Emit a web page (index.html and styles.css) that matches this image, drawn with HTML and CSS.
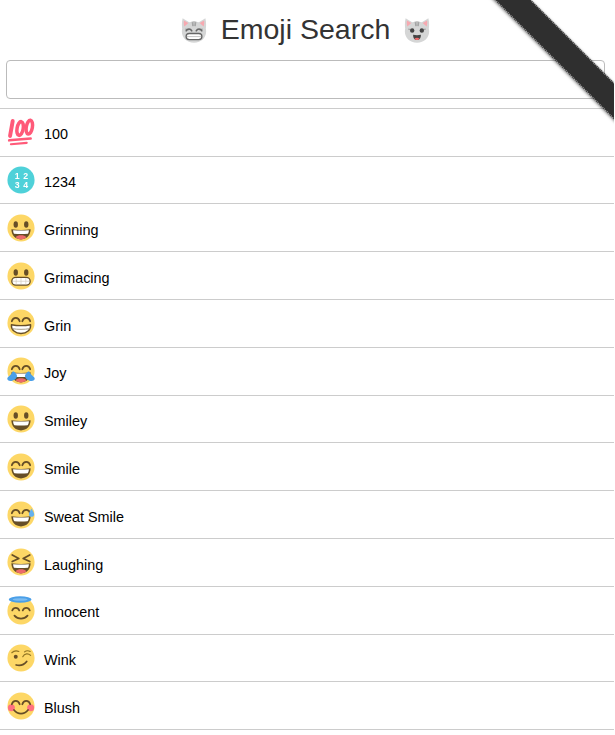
FILE: index.html
```html
<!DOCTYPE html>
<html lang="en">
<head>
  <meta charset="UTF-8" />
  <meta name="viewport" content="width=device-width, initial-scale=1.0" />
  <title>Emoji Search</title>
  <link rel="stylesheet" href="styles.css">
</head>
<body>

  <!-- shared emoji parts -->
  <svg class="defs" aria-hidden="true">
    <symbol id="eyes-round" viewBox="0 0 64 64">
      <ellipse cx="20" cy="24" rx="5" ry="7.500" fill="#664e27"/>
      <ellipse cx="44" cy="24" rx="5" ry="7.500" fill="#664e27"/>
    </symbol>
    <symbol id="eyes-arch" viewBox="0 0 64 64">
      <path d="M11 28c3-10 15-10 18 0M35 28c3-10 15-10 18 0" fill="none" stroke="#664e27" stroke-width="4" stroke-linecap="round"/>
    </symbol>
    <symbol id="mouth-open" viewBox="0 0 64 64">
      <path d="M10 35c14 2 30 2 44 0 0 13-9 23-22 23S10 48 10 35z" fill="#664e27"/>
      <path d="M14 37c12 1 24 1 36 0 0 4-1 7-3 9-10 1-20 1-30 0-2-2-3-5-3-9z" fill="#fff"/>
    </symbol>
    <symbol id="mouth-tongue" viewBox="0 0 64 64">
      <path d="M10 35c14 2 30 2 44 0 0 13-9 23-22 23S10 48 10 35z" fill="#664e27"/>
      <path d="M14 37c12 1 24 1 36 0 0 3-1 6-2 8-10 1-22 1-32 0-1-2-2-5-2-8z" fill="#fff"/>
      <path d="M20 53c4-6 20-6 24 0-3 3-7 5-12 5s-9-2-12-5z" fill="#ed6a6a"/>
    </symbol>
    <symbol id="teeth" viewBox="0 0 64 64">
      <rect x="11" y="35" width="42" height="18" rx="9" fill="#fff" stroke="#664e27" stroke-width="3"/>
      <path d="M13 44h38M21 37v14M32 37v14M43 37v14" stroke="#cfc8ba" stroke-width="1.500"/>
    </symbol>
    <symbol id="teeth-curved" viewBox="0 0 64 64">
      <path d="M10 36c15 3 29 3 44 0 1 12-9 20-22 20S9 48 10 36z" fill="#fff" stroke="#664e27" stroke-width="3" stroke-linejoin="round"/>
      <path d="M12 45c13 2 27 2 40 0" fill="none" stroke="#9c9078" stroke-width="2"/>
    </symbol>
    <symbol id="smile-line" viewBox="0 0 64 64">
      <path d="M16 41c9 11 23 11 32 0" fill="none" stroke="#664e27" stroke-width="4" stroke-linecap="round"/>
    </symbol>
    <symbol id="cat-head" viewBox="0 0 64 64">
      <path d="M6 5l15 9c7-2 15-2 22 0L58 5c2 7 2 17 1 24 4 17-8 32-27 32S1 46 5 29C4 22 4 12 6 5z" fill="#d5d6d6"/>
      <path d="M9 10l10 6-9 8c-1-4-2-9-1-14zM55 10L45 16l9 8c1-4 2-9 1-14z" fill="#f7a9b0"/>
      <path d="M28 14l1 8M32 13v9M36 14l-1 8M13 30l6 2M51 30l-6 2" stroke="#a3a4a4" stroke-width="2.600" stroke-linecap="round"/>
    </symbol>
  </svg>

  <h1 class="title">
    <svg class="title-emoji" viewBox="0 0 64 64" aria-hidden="true">
      <use href="#cat-head"/>
      <path d="M14 34c3-6 10-6 13 0M37 34c3-6 10-6 13 0" fill="none" stroke="#666" stroke-width="3.400" stroke-linecap="round"/>
      <rect x="14" y="40" width="36" height="14" rx="7" fill="#fff" stroke="#666" stroke-width="3"/>
      <path d="M16 47h32" stroke="#aaa" stroke-width="1.500"/>
    </svg>
    <span>Emoji Search</span>
    <svg class="title-emoji" viewBox="0 0 64 64" aria-hidden="true">
      <use href="#cat-head"/>
      <circle cx="21" cy="33" r="5" fill="#444"/>
      <circle cx="43" cy="33" r="5" fill="#444"/>
      <path d="M23 43c6 1 12 1 18 0 0 8-3 12-9 12s-9-4-9-12z" fill="#444"/>
      <path d="M26 52c3-3 9-3 12 0-3 4-9 4-12 0z" fill="#ed6a6a"/>
    </svg>
  </h1>

  <div class="search">
    <input class="search-input" type="text">
  </div>

  <ul class="emoji-list">
    <li class="row">
      <svg class="emoji" viewBox="0 0 64 64" aria-hidden="true">
        <g fill="none" stroke="#ff5a79" stroke-linecap="round">
          <path d="M13 7L7 41" stroke-width="9"/>
          <ellipse cx="30" cy="24" rx="7" ry="16" transform="rotate(10 30 24)" stroke-width="8"/>
          <ellipse cx="51" cy="21" rx="7" ry="16" transform="rotate(10 51 21)" stroke-width="8"/>
          <path d="M5 51l49-4" stroke-width="6"/>
          <path d="M9 60l36-3" stroke-width="5"/>
        </g>
      </svg>
      <span class="label">100</span>
    </li>
    <li class="row">
      <svg class="emoji" viewBox="0 0 64 64" aria-hidden="true">
        <circle cx="32" cy="32" r="31" fill="#4fd1d9"/>
        <text class="digits" x="33" y="29" text-anchor="middle">1 2</text>
        <text class="digits" x="33" y="51" text-anchor="middle">3 4</text>
      </svg>
      <span class="label">1234</span>
    </li>
    <li class="row">
      <svg class="emoji" viewBox="0 0 64 64" aria-hidden="true">
        <circle class="face" cx="32" cy="32" r="31"/>
        <use href="#eyes-round"/><use href="#mouth-tongue"/>
      </svg>
      <span class="label">Grinning</span>
    </li>
    <li class="row">
      <svg class="emoji" viewBox="0 0 64 64" aria-hidden="true">
        <circle class="face" cx="32" cy="32" r="31"/>
        <use href="#eyes-round"/><use href="#teeth"/>
      </svg>
      <span class="label">Grimacing</span>
    </li>
    <li class="row">
      <svg class="emoji" viewBox="0 0 64 64" aria-hidden="true">
        <circle class="face" cx="32" cy="32" r="31"/>
        <use href="#eyes-arch"/><use href="#teeth-curved"/>
      </svg>
      <span class="label">Grin</span>
    </li>
    <li class="row">
      <svg class="emoji" viewBox="0 0 64 64" aria-hidden="true">
        <circle class="face" cx="32" cy="32" r="31"/>
        <use href="#eyes-arch"/><use href="#mouth-tongue"/>
        <path d="M13 33c-2 6-7 10-11 13-3 3-1 9 6 9 8 0 14-6 15-11 0-5-6-12-10-11zM51 33c2 6 7 10 11 13 3 3 1 9-6 9-8 0-14-6-15-11 0-5 6-12 10-11z" fill="#4a9fe8"/>
      </svg>
      <span class="label">Joy</span>
    </li>
    <li class="row">
      <svg class="emoji" viewBox="0 0 64 64" aria-hidden="true">
        <circle class="face" cx="32" cy="32" r="31"/>
        <use href="#eyes-round"/><use href="#mouth-open"/>
      </svg>
      <span class="label">Smiley</span>
    </li>
    <li class="row">
      <svg class="emoji" viewBox="0 0 64 64" aria-hidden="true">
        <circle class="face" cx="32" cy="32" r="31"/>
        <use href="#eyes-arch"/><use href="#mouth-open"/>
      </svg>
      <span class="label">Smile</span>
    </li>
    <li class="row">
      <svg class="emoji" viewBox="0 0 64 64" aria-hidden="true">
        <circle class="face" cx="32" cy="32" r="31"/>
        <use href="#eyes-arch"/><use href="#mouth-open"/>
        <path d="M56 17c-3 6-6 9-6 13 0 4 3 6 6 6s6-2 6-6c0-4-3-7-6-13z" fill="#65b1ef"/>
      </svg>
      <span class="label">Sweat Smile</span>
    </li>
    <li class="row">
      <svg class="emoji" viewBox="0 0 64 64" aria-hidden="true">
        <circle class="face" cx="32" cy="32" r="31"/>
        <path d="M12 16l15 8-15 7M52 16l-15 8 15 7" fill="none" stroke="#664e27" stroke-width="4" stroke-linecap="round" stroke-linejoin="round"/>
        <use href="#mouth-tongue"/>
      </svg>
      <span class="label">Laughing</span>
    </li>
    <li class="row">
      <svg class="emoji" viewBox="0 0 64 64" aria-hidden="true">
        <circle class="face" cx="32" cy="34" r="31"/>
        <ellipse cx="30" cy="8" rx="26" ry="7.500" fill="#4a9fe8"/>
        <ellipse cx="30" cy="8" rx="17" ry="3" fill="#7dbcf0"/>
        <path d="M12 33c3-8 13-8 16 0M36 33c3-8 13-8 16 0" fill="none" stroke="#664e27" stroke-width="4" stroke-linecap="round"/>
        <path d="M17 45c8 9 22 9 30 0" fill="none" stroke="#664e27" stroke-width="4" stroke-linecap="round"/>
      </svg>
      <span class="label">Innocent</span>
    </li>
    <li class="row">
      <svg class="emoji" viewBox="0 0 64 64" aria-hidden="true">
        <circle class="face" cx="32" cy="32" r="31"/>
        <circle cx="20" cy="29" r="4.500" fill="#664e27"/>
        <path d="M11 20c4-4 11-5 16-3M36 29c4-8 13-8 18-3M40 18c4-3 9-3 13-1" fill="none" stroke="#917524" stroke-width="2.600" stroke-linecap="round"/>
        <path d="M21 48c9 2 18 0 24-8" fill="none" stroke="#664e27" stroke-width="4" stroke-linecap="round"/>
      </svg>
      <span class="label">Wink</span>
    </li>
    <li class="row">
      <svg class="emoji" viewBox="0 0 64 64" aria-hidden="true">
        <circle class="face" cx="32" cy="32" r="31"/>
        <circle cx="10" cy="36" r="8" fill="#ff717f"/>
        <circle cx="54" cy="36" r="8" fill="#ff717f"/>
        <use href="#eyes-arch"/><use href="#smile-line"/>
      </svg>
      <span class="label">Blush</span>
    </li>
  </ul>

  <a class="ribbon-wrap" href="#" aria-label="Fork me">
    <span class="ribbon"></span>
  </a>

</body>
</html>
```

FILE: styles.css
```css
body {
  font-family: "Liberation Sans", Arial, sans-serif;
  margin: 0;
  padding: 0 1px 0 0;
  background: #ffffff;
  color: #000000;
}

.defs {
  display: none;
}

.title {
  display: flex;
  justify-content: center;
  align-items: center;
  gap: 13px;
  margin: 0;
  height: 59px;
  padding-right: 3px;
  padding-bottom: 1px;
  font-size: 28.5px;
  font-weight: 400;
  color: #333333;
}

.title-emoji {
  width: 28px;
  height: 28px;
  filter: blur(0.3px);
}

.search {
  padding: 0 9px 8.8px 6px;
  border-bottom: 1px solid #cccccc;
}

.search-input {
  display: block;
  box-sizing: border-box;
  width: 100%;
  height: 39px;
  border: 1px solid #bbbbbb;
  border-radius: 4px;
  background: #ffffff;
}

.emoji-list {
  list-style: none;
  margin: 0;
  padding: 0;
}

.row {
  display: flex;
  align-items: center;
  gap: 9.5px;
  box-sizing: border-box;
  height: 47.8px;
  padding-left: 6.5px;
  border-bottom: 1px solid #cccccc;
  font-size: 14.4px;
}

.label {
  padding-top: 4.5px;
}

.emoji {
  width: 28px;
  height: 28px;
  flex: none;
  overflow: visible;
  filter: blur(0.3px);
}

.face {
  fill: #fdd766;
}

.digits {
  font-size: 20px;
  font-weight: 700;
  word-spacing: 3px;
  fill: #ffffff;
}

/* Ribbon in the corner */
.ribbon-wrap {
  position: absolute;
  top: 0;
  right: 1px;
  width: 149px;
  height: 149px;
  overflow: hidden;
}

.ribbon {
  position: absolute;
  left: -1.2px;
  top: 37.8px;
  box-sizing: border-box;
  width: 200px;
  height: 26px;
  background: #2f2f2f;
  border-top: 1px dotted rgba(255, 255, 255, 0.7);
  border-bottom: 1px dotted rgba(255, 255, 255, 0.7);
  box-shadow: 0 1px 3px rgba(0, 0, 0, 0.5);
  transform: rotate(45deg);
}
```
